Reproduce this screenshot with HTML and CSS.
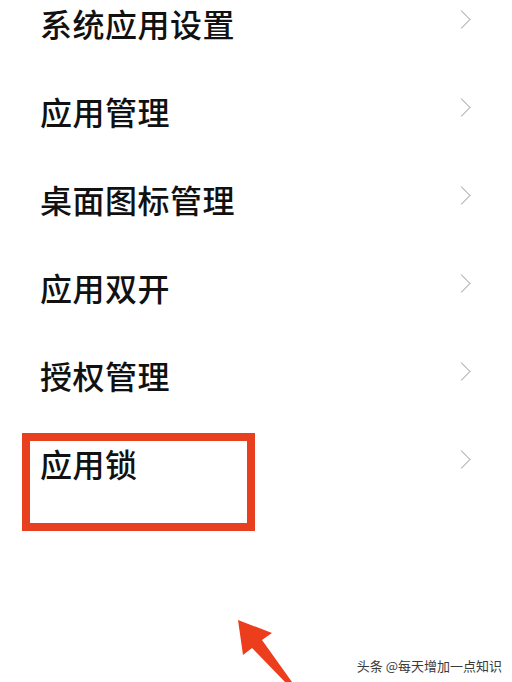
FILE: index.html
```html
<!DOCTYPE html>
<html lang="zh-CN">
<head>
  <meta charset="UTF-8" />
  <meta name="viewport" content="width=device-width, initial-scale=1.0"/>
  <title>应用设置</title>
  <link rel="stylesheet" href="styles.css">
</head>
<body>
  <ul class="menu">
    <li class="row"><span>系统应用设置</span><i class="chev"></i></li>
    <li class="row"><span>应用管理</span><i class="chev"></i></li>
    <li class="row"><span>桌面图标管理</span><i class="chev"></i></li>
    <li class="row"><span>应用双开</span><i class="chev"></i></li>
    <li class="row"><span>授权管理</span><i class="chev"></i></li>
    <li class="row"><span>应用锁</span><i class="chev"></i></li>
  </ul>

  <div class="highlight"></div>

  <svg class="arrow" width="80" height="70" viewBox="0 0 80 70">
    <polygon points="18,15 52,28 42,35 72,77 65,77 32,43 23,50" fill="#ec3d1d"/>
  </svg>

  <div class="watermark">头条 @每天增加一点知识</div>
</body>
</html>
```

FILE: styles.css
```css
body {
  margin: 0;
  width: 512px;
  height: 682px;
  overflow: hidden;
  position: relative;
  background: #fff;
  color: #111;
  font-family: "Noto Sans CJK SC", "Noto Sans", sans-serif;
}
.menu {
  list-style: none;
  margin: 0;
  padding: 0;
}
.row {
  height: 88px;
  box-sizing: border-box;
  display: flex;
  align-items: flex-start;
  justify-content: space-between;
  padding: 4px 40px 0 40px;
  font-size: 32px;
  line-height: 38px;
  font-weight: 500;
  letter-spacing: 0.5px;
}
.chev {
  width: 12px;
  height: 12px;
  border-top: 1.5px solid #b4b4b4;
  border-right: 1.5px solid #b4b4b4;
  transform: rotate(45deg);
  margin: 9px 4px 0 0;
}
.highlight {
  position: absolute;
  left: 22px;
  top: 433px;
  width: 217px;
  height: 82px;
  border: 8px solid #e8401f;
}
.arrow {
  position: absolute;
  left: 220px;
  top: 605px;
  overflow: visible;
}
.watermark {
  position: absolute;
  right: 10px;
  top: 656px;
  font-size: 13px;
  color: #3a3a3a;
  text-shadow: 0 0 2px #fff;
}
```
